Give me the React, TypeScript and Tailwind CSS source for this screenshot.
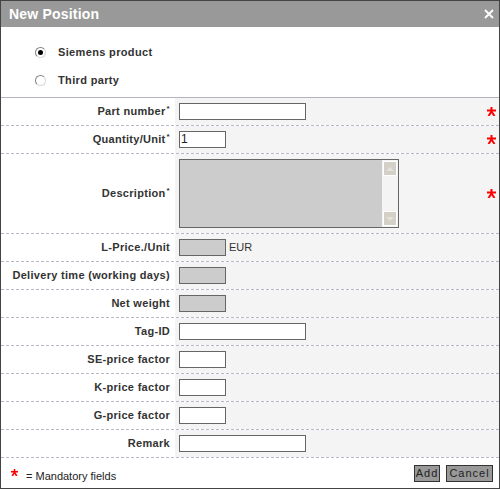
import React from "react";

type Row = {
  label: string;
  required?: boolean;
  kind: "wide" | "small" | "grey" | "area";
  value?: string;
  unit?: string;
};

const rows: Row[] = [
  { label: "Part number", required: true, kind: "wide" },
  { label: "Quantity/Unit", required: true, kind: "small", value: "1" },
  { label: "Description", required: true, kind: "area" },
  { label: "L-Price./Unit", kind: "grey", unit: "EUR" },
  { label: "Delivery time (working days)", kind: "grey" },
  { label: "Net weight", kind: "grey" },
  { label: "Tag-ID", kind: "wide" },
  { label: "SE-price factor", kind: "small" },
  { label: "K-price factor", kind: "small" },
  { label: "G-price factor", kind: "small" },
  { label: "Remark", kind: "wide" },
];

function RedStar({ small }: { small?: boolean }) {
  const s = small ? 7 : 9;
  return (
    <svg width={s} height={s} viewBox="0 0 9 9" className="block">
      <g stroke="#ff0000" strokeWidth="2" fill="none">
        <path d="M4.5 0 V5" />
        <path d="M0 3.5 H9" />
        <path d="M4.5 4.5 L1.5 9" />
        <path d="M4.5 4.5 L7.5 9" />
      </g>
    </svg>
  );
}

function Radio({ checked, label }: { checked?: boolean; label: string }) {
  return (
    <div className="flex items-center h-[14px]">
      <span className="w-[11px] h-[11px] rounded-full border border-t-[#808080] border-l-[#808080] border-r-[#d8d8d8] border-b-[#d8d8d8] bg-white flex items-center justify-center">
        {checked && <span className="w-[5px] h-[5px] rounded-full bg-black" />}
      </span>
      <span className="ml-[12px] text-[11px] font-bold text-[#333] tracking-[0.35px]">{label}</span>
    </div>
  );
}

function Field({ row }: { row: Row }) {
  if (row.kind === "area") {
    return (
      <div className="w-[220px] h-[69px] border border-[#666] bg-[#cccccc] flex justify-end">
        <div className="w-[16px] h-full bg-[#f4f4f4] flex flex-col justify-between p-[1px]">
          <div className="w-[14px] h-[15px] bg-[#d4d0c8] border border-white flex items-center justify-center">
            <svg width="8" height="4" viewBox="0 0 8 4">
              <path d="M0 4 L4 0 L8 4 Z" fill="#e4e2dc" />
            </svg>
          </div>
          <div className="w-[14px] h-[15px] bg-[#d4d0c8] border border-white flex items-center justify-center">
            <svg width="8" height="4" viewBox="0 0 8 4">
              <path d="M0 0 L8 0 L4 4 Z" fill="#e4e2dc" />
            </svg>
          </div>
        </div>
      </div>
    );
  }
  const cls =
    row.kind === "wide"
      ? "w-[127px] bg-white"
      : row.kind === "small"
      ? "w-[47px] bg-white"
      : "w-[47px] bg-[#cccccc]";
  return (
    <div className="flex items-center">
      <div className={`${cls} h-[17px] border border-[#666] text-[12px] leading-[15px] pl-[1px] text-[#222]`}>
        {row.value}
      </div>
      {row.unit && <span className="ml-[3px] text-[11px] text-[#333]">{row.unit}</span>}
    </div>
  );
}

export default function App() {
  return (
    <div
      className="w-[500px] h-[489px] border border-[#444] bg-white flex flex-col overflow-hidden"
      style={{ fontFamily: '"Liberation Sans", Arial, sans-serif' }}
    >
      <div className="h-[26px] bg-[#999999] flex items-center justify-between pl-[8px] pr-[5px]">
        <span className="text-white text-[14px] font-bold tracking-[0.2px]">New Position</span>
        <svg width="10" height="10" viewBox="0 0 10 10">
          <path d="M1 1 L9 9 M9 1 L1 9" stroke="white" strokeWidth="1.8" />
        </svg>
      </div>

      <div className="h-[71px] flex flex-col pl-[34px] pt-[18px] gap-[14px] border-b border-[#b4b4bc]">
        <Radio checked label="Siemens product" />
        <Radio label="Third party" />
      </div>

      <div className="flex flex-col">
        {rows.map((row) => (
          <div
            key={row.label}
            className={`flex border-b border-dashed border-[#b8b8c8] ${row.kind === "area" ? "h-[80px]" : "h-[28px]"}`}
          >
            <div className="w-[174px] flex items-center justify-end pr-[5px] text-[11px] font-bold text-[#333] whitespace-nowrap tracking-[0.3px]">
              {row.label}
              {row.required && <sup className="text-[8px] font-bold ml-[1px] -top-[3px]">*</sup>}
            </div>
            <div className="flex-1 bg-[#f4f4f4] flex items-center justify-between pl-[4px] pr-[3px]">
              <Field row={row} />
              {row.required && <RedStar />}
            </div>
          </div>
        ))}
      </div>

      <div className="flex-1 flex items-center justify-between pl-[10px] pr-[6px]">
        <div className="flex items-center pt-[7px]">
          <div className="-mt-[8px]">
            <RedStar small />
          </div>
          <span className="ml-[8px] text-[11px] text-[#222]">= Mandatory fields</span>
        </div>
        <div className="flex gap-[6px]">
          <button className="w-[26px] h-[17px] bg-[#999999] border border-[#333] text-[11px] leading-[15px] text-[#222] tracking-[1px] text-center">
            Add
          </button>
          <button className="w-[47px] h-[17px] bg-[#999999] border border-[#333] text-[11px] leading-[15px] text-[#222] tracking-[1px] text-center">
            Cancel
          </button>
        </div>
      </div>
    </div>
  );
}
